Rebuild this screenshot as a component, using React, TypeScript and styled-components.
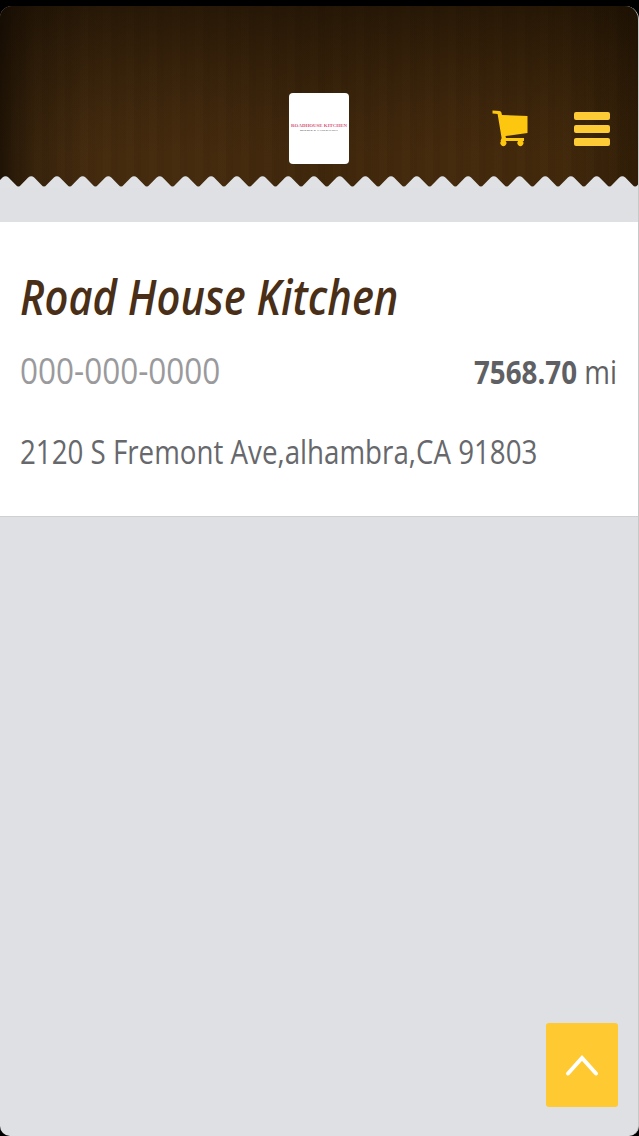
import React from "react";
import styled, { createGlobalStyle } from "styled-components";

const Global = createGlobalStyle`
  html, body { margin: 0; padding: 0; background: #000; }
  body { font-family: "Open Sans", "Liberation Sans", sans-serif; }
`;

const Screen = styled.div`
  box-sizing: border-box;
  width: 639px;
  height: 1136px;
  background: #000;
  padding-top: 6px;
`;

const Panel = styled.div`
  position: relative;
  height: 1130px;
  background: #dfe0e3;
  border-radius: 12px 14px 10px 10px;
  border-right: 1px solid #c8c8c8;
  box-sizing: border-box;
  overflow: hidden;
`;

const Header = styled.header`
  position: relative;
  height: 182px;
  background:
    linear-gradient(90deg, rgba(10, 5, 0, 0.6) 0, rgba(10, 5, 0, 0.22) 32px, rgba(10, 5, 0, 0) 90px, rgba(10, 5, 0, 0) 560px, rgba(10, 5, 0, 0.18) 615px, rgba(10, 5, 0, 0.34) 639px),
    linear-gradient(180deg, rgba(15, 8, 0, 0.55) 0, rgba(15, 8, 0, 0.32) 50px, rgba(15, 8, 0, 0.1) 110px, rgba(15, 8, 0, 0) 150px),
    repeating-linear-gradient(90deg, rgba(0, 0, 0, 0.03) 0 3px, rgba(0, 0, 0, 0) 3px 11px, rgba(255, 200, 130, 0.01) 11px 19px, rgba(0, 0, 0, 0.02) 19px 23px),
    linear-gradient(90deg, #422a0e 0, #452b0e 30%, #3f270c 50%, #442a0d 70%, #3f270a 100%);
`;

const HeaderRow = styled.div`
  display: grid;
  grid-template-columns: 60px 1fr auto;
  align-items: center;
  height: 71px;
  padding: 87px 28px 0 289px;
`;

const LogoCard = styled.div`
  width: 60px;
  height: 71px;
  background: #fff;
  border-radius: 4px;
  display: flex;
  flex-direction: column;
  align-items: center;
  justify-content: center;
  font-family: "Liberation Serif", serif;
  line-height: 1;
  white-space: nowrap;
`;

const LogoName = styled.span`
  color: #d8577a;
  font-size: 4.9px;
  font-weight: 700;
`;

const LogoSub = styled.span`
  color: #555;
  font-size: 2.6px;
  font-weight: 700;
  letter-spacing: 0.3px;
  margin-top: 1px;
`;

const Actions = styled.div`
  grid-column: 3;
  display: flex;
  align-items: center;
  gap: 46px;
`;

const CartIcon = styled.svg`
  display: block;
  width: 36px;
  height: 37px;
`;

const Burger = styled.div`
  display: flex;
  flex-direction: column;
  gap: 5px;
  width: 36px;
`;

const BurgerBar = styled.span`
  display: block;
  height: 8px;
  border-radius: 2px;
  background: #fdcb35;
`;

const Zigzag = styled.svg`
  position: absolute;
  left: 0;
  bottom: 0;
  display: block;
`;

const Card = styled.section`
  margin-top: 34px;
  height: 295px;
  box-sizing: border-box;
  background: #fff;
  border-bottom: 1px solid #cfd0d2;
  padding: 44px 21px 0 20px;
`;

const Title = styled.h1`
  margin: 0;
  color: #4a2f18;
  font-size: 48px;
  line-height: 62px;
  font-weight: 600;
  font-style: italic;
  white-space: nowrap;
  transform: scaleX(0.867);
  transform-origin: left center;
`;

const InfoRow = styled.div`
  display: flex;
  justify-content: space-between;
  align-items: baseline;
  margin-top: 20px;
`;

const Phone = styled.span`
  display: inline-block;
  color: #9a9a9d;
  font-size: 37px;
  line-height: 44px;
  white-space: nowrap;
  transform: scaleX(0.851);
  transform-origin: left center;
`;

const Distance = styled.span`
  display: inline-block;
  color: #5f6063;
  font-size: 32px;
  line-height: 44px;
  white-space: nowrap;
  transform: scaleX(0.867);
  transform-origin: right center;
`;

const Strong = styled.b`
  font-weight: 700;
`;

const Address = styled.p`
  margin: 38px 0 0;
  color: #67686c;
  font-size: 32px;
  line-height: 40px;
  white-space: nowrap;
  transform: scaleX(0.866);
  transform-origin: left center;
`;

const ScrollTop = styled.button`
  position: absolute;
  left: 546px;
  top: 1017px;
  width: 72px;
  height: 84px;
  border: 0;
  padding: 0;
  border-radius: 3px;
  background: #fec931;
  display: flex;
  align-items: center;
  justify-content: center;
`;

const Chevron = styled.svg`
  display: block;
  width: 36px;
  height: 24px;
`;

function zigzagPath() {
  const period = 25.7;
  let d = "M0 12 L0 6";
  for (let i = -1; i < 26; i++) {
    const peak = 5.5 + i * period;
    const trough = peak + period / 2;
    d += ` L${(peak - 3).toFixed(1)} 1.4 Q${peak.toFixed(1)} -0.8 ${(peak + 3).toFixed(1)} 1.4`;
    d += ` L${(trough - 2.5).toFixed(1)} 9 Q${trough.toFixed(1)} 12 ${(trough + 2.5).toFixed(1)} 9`;
  }
  d += " L639 12 Z";
  return d;
}

export default function App() {
  return (
    <Screen>
      <Global />
      <Panel>
        <Header>
          <HeaderRow>
            <LogoCard>
              <LogoName>ROADHOUSE KITCHEN</LogoName>
              <LogoSub>BURGER &amp; SANDWICHES</LogoSub>
            </LogoCard>
            <Actions>
              <CartIcon viewBox="0 0 36 37" aria-label="Cart">
                <path
                  fill="#fdc60f"
                  d="M0.5 0.5 L7.5 1 Q9 1 9.4 2.6 L10 5 L35.5 6 L35.5 23 L13.5 26 L14 28 L32 28 L32 31 L30.6 31 A3 3 0 1 1 26.2 31 L13.6 31 A3 3 0 1 1 9.2 31 L8.5 31 L9.6 28 L5.6 4 L0.5 3.6 Z"
                />
              </CartIcon>
              <Burger aria-label="Menu">
                <BurgerBar />
                <BurgerBar />
                <BurgerBar />
              </Burger>
            </Actions>
          </HeaderRow>
          <Zigzag width="639" height="12" viewBox="0 0 639 12">
            <path fill="#dfe1e5" d={zigzagPath()} />
          </Zigzag>
        </Header>
        <Card>
          <Title>Road House Kitchen</Title>
          <InfoRow>
            <Phone>000-000-0000</Phone>
            <Distance>
              <Strong>7568.70</Strong> mi
            </Distance>
          </InfoRow>
          <Address>2120 S Fremont Ave,alhambra,CA 91803</Address>
        </Card>
        <ScrollTop aria-label="Scroll to top">
          <Chevron viewBox="0 0 36 24">
            <path d="M4 20.5 L18 5 L32 20.5" fill="none" stroke="#fff" strokeWidth="4" strokeLinecap="round" />
          </Chevron>
        </ScrollTop>
      </Panel>
    </Screen>
  );
}
